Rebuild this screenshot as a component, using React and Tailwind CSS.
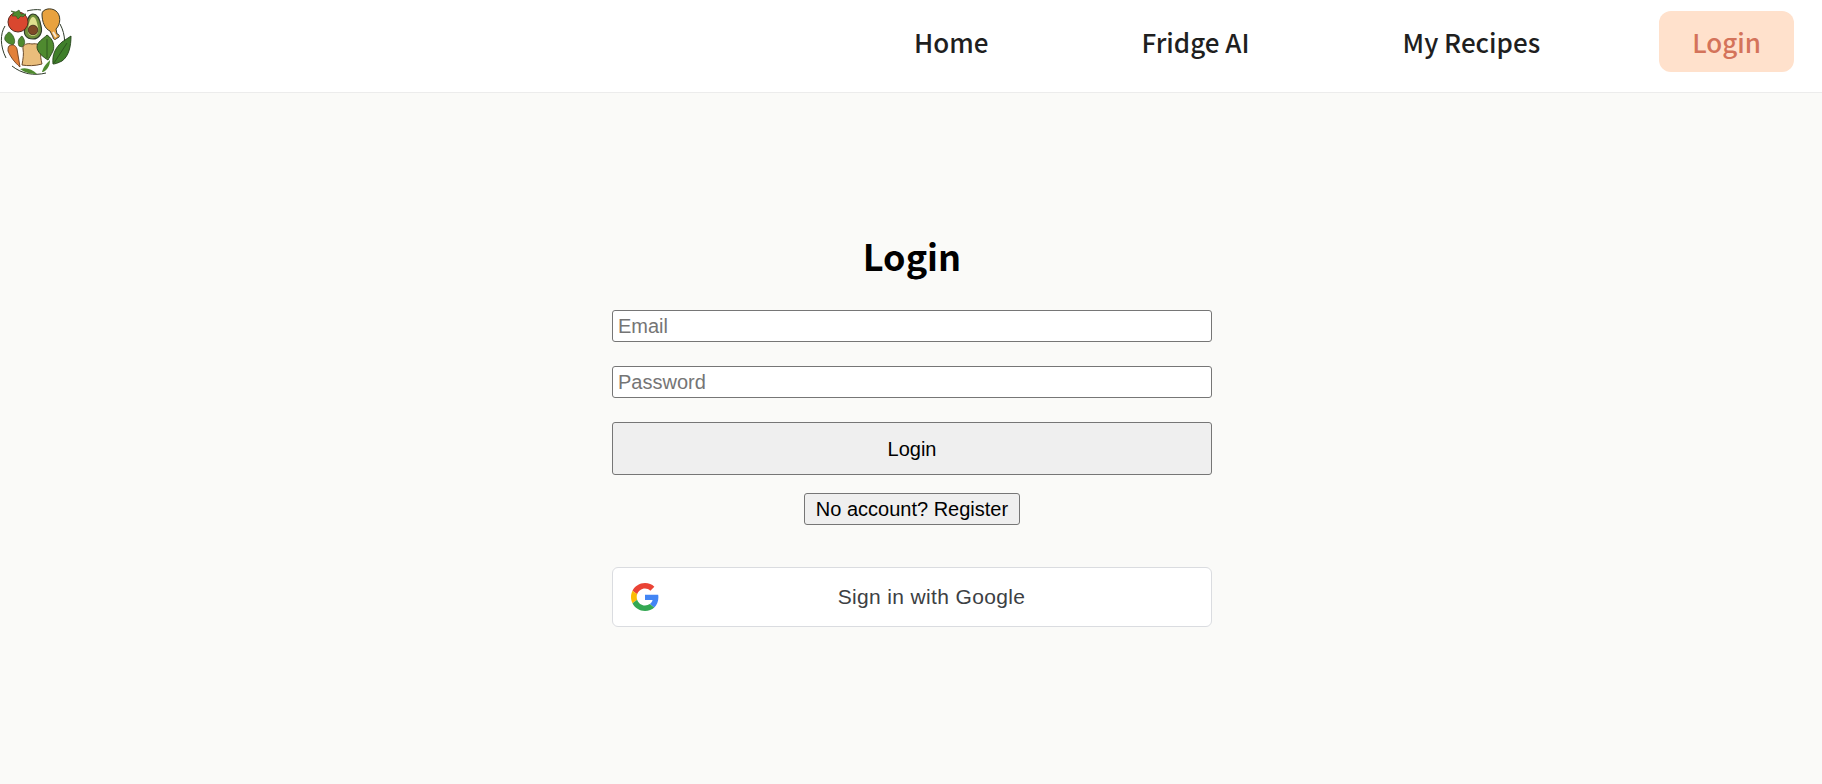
import React from 'react';

function Logo() {
  return (
    <svg width="72" height="76" viewBox="0 0 72 76" className="shrink-0 self-start">
      {/* plate outline */}
      <path d="M6 58C0 46 0 34 5 26" fill="none" stroke="#2f3b2a" strokeWidth="1" />
      <path d="M60 24C66 35 66 48 61 58" fill="none" stroke="#2f3b2a" strokeWidth="1" />
      <path d="M12 66C22 74 34 76 46 73" fill="none" stroke="#2f3b2a" strokeWidth="1" />
      <path d="M27 11C30 10 37 9 41 10" fill="none" stroke="#2f3b2a" strokeWidth="1" />
      {/* chicken leg */}
      <path d="M42 14C42 9 51 7 56 11C61 15 61 24 56 29L57 34C60 34 60 38 57 38C56 40 53 40 53 37L50 31C45 29 42 22 42 14Z" fill="#e8a23f" stroke="#3a3a2a" strokeWidth="1" />
      <path d="M53 32L56 37" stroke="#f4e7d0" strokeWidth="2" />
      {/* avocado */}
      <path d="M33 14C38 14 40 20 41 26C43 33 39 39 33 39C26 39 23 34 25 28C27 22 28 14 33 14Z" fill="#6f8f3a" stroke="#2f3b2a" strokeWidth="1.2" />
      <path d="M33 17C36 17 37 23 38 27C39 32 37 36 33 36C29 36 27 32 28 28C29 24 30 17 33 17Z" fill="#dfe08e" />
      <circle cx="33" cy="30" r="4.8" fill="#7d4a26" stroke="#3a2a1a" strokeWidth="0.8" />
      {/* tomato */}
      <circle cx="18" cy="22" r="10" fill="#d9472f" stroke="#5c2a1e" strokeWidth="1" />
      <path d="M19 10L21 14L26 14L23 17L21 16L18 19L16 16L12 16L14 13L11 11L16 12Z" fill="#4f8a2f" stroke="#2f4f20" strokeWidth="0.6" />
      {/* carrot tops */}
      <path d="M9 32C6 34 4 37 5 40C6 42 9 44 13 45C15 43 15 41 14 38C13 35 11 33 9 32Z" fill="#4f8a2f" stroke="#2f4f20" strokeWidth="0.7" />
      <path d="M22 36C19 38 17 41 19 46L22 47C25 45 26 41 22 36Z" fill="#4f8a2f" stroke="#2f4f20" strokeWidth="0.7" />
      {/* carrot */}
      <path d="M9 46C12 44 16 45 17 49C18 55 19 61 20 67C14 62 10 56 8 51C8 49 8 47 9 46Z" fill="#e2803a" stroke="#6b3d1e" strokeWidth="0.9" />
      {/* toast */}
      <path d="M23 49C22 44 28 43 32 44C37 43 42 45 41 50C40 55 41 60 42 64C35 66 28 66 22 65C23 59 24 54 23 49Z" fill="#e9bd7b" stroke="#6b4a2a" strokeWidth="1" />
      {/* spinach */}
      <path d="M47 35C53 39 55 45 53 51C51 55 49 58 48 60C43 57 37 52 37 47C37 42 43 39 47 35Z" fill="#4f8a2f" stroke="#24421a" strokeWidth="0.9" />
      <path d="M47 39L47 58" stroke="#24421a" strokeWidth="0.7" />
      {/* big leaf */}
      <path d="M71 36C71 46 69 56 62 61C58 63 55 64 53 64C52 55 55 48 62 42C65 40 68 38 71 36Z" fill="#3f7f2a" stroke="#24421a" strokeWidth="0.9" />
      <path d="M54 63L67 43" stroke="#24421a" strokeWidth="0.7" />
      <path d="M42 72C43 67 47 63 50 60C50 66 47 70 43 72Z" fill="#4f8a2f" />
      <path d="M20 69C26 67 32 69 37 74C31 74 25 73 20 69Z" fill="#4f8a2f" />
    </svg>
  );
}

function GoogleIcon() {
  return (
    <svg width="28" height="28" viewBox="0 0 48 48" className="shrink-0">
      <path fill="#EA4335" d="M24 9.5c3.54 0 6.71 1.22 9.21 3.6l6.85-6.85C35.9 2.38 30.47 0 24 0 14.62 0 6.51 5.38 2.56 13.22l7.98 6.19C12.43 13.72 17.74 9.5 24 9.5z" />
      <path fill="#4285F4" d="M46.98 24.55c0-1.57-.15-3.09-.38-4.55H24v9.02h12.94c-.58 2.96-2.26 5.48-4.78 7.18l7.73 6c4.51-4.18 7.09-10.36 7.09-17.65z" />
      <path fill="#FBBC05" d="M10.53 28.59c-.48-1.45-.76-2.99-.76-4.59s.27-3.14.76-4.59l-7.98-6.19C.92 16.46 0 20.12 0 24c0 3.88.92 7.54 2.56 10.78l7.97-6.19z" />
      <path fill="#34A853" d="M24 48c6.48 0 11.93-2.13 15.89-5.81l-7.73-6c-2.15 1.45-4.92 2.3-8.16 2.3-6.26 0-11.57-4.22-13.47-9.91l-7.98 6.19C6.51 42.62 14.62 48 24 48z" />
    </svg>
  );
}

export default function App() {
  const links = ['Home', 'Fridge AI', 'My Recipes'];

  return (
    <div className="min-h-screen bg-[#fafaf8] font-['Liberation_Sans',Arial,sans-serif]">
      {/* Navbar */}
      <header className="h-[93px] bg-white border-b border-[#ececec] flex items-center justify-between pr-[28px] pb-[9px] font-['Noto_Sans_CJK_KR','Noto_Sans',sans-serif]">
        <Logo />
        <nav className="flex items-center gap-[85px] text-[26px] font-medium text-[#1f1f1f]">
          {links.map((link) => (
            <a key={link} className="px-[34px] py-[11px] leading-[40px]">{link}</a>
          ))}
          <a className="px-[33px] h-[61px] flex items-center rounded-[12px] bg-[#ffe1cc] text-[#d4735a]">Login</a>
        </nav>
      </header>

      {/* Login form */}
      <main className="w-[600px] ml-[612px] pt-[133px] flex flex-col items-center">
        <h1 className="text-[36px] leading-[58px] font-bold text-black font-['Noto_Sans_CJK_KR','Noto_Sans',sans-serif]">Login</h1>
        <input
          type="email"
          placeholder="Email"
          className="mt-[26px] w-full h-[32px] px-[5px] bg-white border border-[#767676] rounded-[3px] text-[20px] placeholder:text-[#757575]"
        />
        <input
          type="password"
          placeholder="Password"
          className="mt-[24px] w-full h-[32px] px-[5px] bg-white border border-[#767676] rounded-[3px] text-[20px] placeholder:text-[#757575]"
        />
        <button className="mt-[24px] w-full h-[53px] bg-[#efefef] border border-[#767676] rounded-[3px] text-[20px] text-black">Login</button>
        <button className="mt-[18px] h-[32px] px-[11px] bg-[#efefef] border border-[#767676] rounded-[3px] text-[20px] leading-none text-black">No account? Register</button>
        <button className="mt-[42px] w-full h-[60px] bg-white border border-[#dadce0] rounded-[6px] flex items-center pl-[18px] pr-[7px] text-[21px] tracking-[0.35px] text-[#3c4043]">
          <GoogleIcon />
          <span className="flex-1 text-center">Sign in with Google</span>
        </button>
      </main>
    </div>
  );
}
